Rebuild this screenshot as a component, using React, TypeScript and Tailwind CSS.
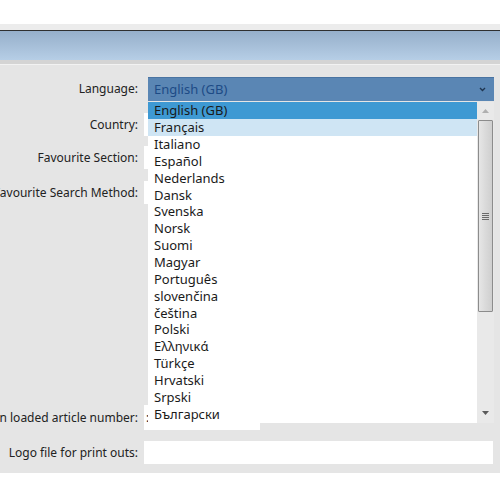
import { useState } from 'react';

const LANGUAGES = [
  'English (GB)',
  'Français',
  'Italiano',
  'Español',
  'Nederlands',
  'Dansk',
  'Svenska',
  'Norsk',
  'Suomi',
  'Magyar',
  'Português',
  'slovenčina',
  'čeština',
  'Polski',
  'Ελληνικά',
  'Türkçe',
  'Hrvatski',
  'Srpski',
  'Български',
];

function Label({ text }: { text: string }) {
  return (
    <div className="w-[138px] shrink-0 h-[23px] flex items-center justify-end whitespace-nowrap text-[#222222]">
      {text}
    </div>
  );
}

export default function App() {
  const [language, setLanguage] = useState('English (GB)');
  const [hovered] = useState('Français');

  return (
    <div
      className="relative w-[500px] h-[500px] overflow-hidden bg-white text-[12px] leading-none"
      style={{ fontFamily: '"Noto Sans", "Open Sans", sans-serif' }}
    >
      {/* Window chrome */}
      <div className="h-[24px] bg-white" />
      <div className="h-[6px] bg-[#ececec]" />
      <div className="h-[1px] bg-[#2f2f2f]" />
      <div className="h-[29px] bg-gradient-to-b from-[#96afca] to-[#b6cee6]" />
      <div className="h-[4px] bg-[#d4d4d4]" />
      <div className="h-[1px] bg-[#f2f2f2]" />

      {/* Settings form */}
      <div className="h-[408px] bg-[#e5e5e5] pt-[12px] flex flex-col">
        <div className="h-[36px] flex gap-[10px]">
          <Label text="Language:" />
          <div className="w-[346px] h-[24px] bg-[#5a86b4] border-t border-[#4a74a2] flex items-center justify-between pl-[6px] pr-[8px]">
            <span className="text-[#1d4b86] text-[13px]">{language}</span>
            <svg className="w-[7px] h-[5px] text-[#1f3550]" viewBox="0 0 7 5" fill="none" stroke="currentColor" strokeWidth={1.4}>
              <path d="M1 1l2.5 2.5L6 1" />
            </svg>
          </div>
        </div>
        <div className="h-[33px] flex gap-[6px]">
          <Label text="Country:" />
          <div className="w-[350px] h-[23px] bg-white" />
        </div>
        <div className="h-[35px] flex gap-[6px]">
          <Label text="Favourite Section:" />
          <div className="w-[350px] h-[23px] bg-white" />
        </div>
        <div className="h-[224px] flex gap-[6px]">
          <Label text="Favourite Search Method:" />
          <div className="w-[350px] h-[23px] bg-white" />
        </div>
        <div className="h-[36px] flex gap-[6px]">
          <div className="w-[138px] shrink-0 h-[25px] flex items-center justify-end whitespace-nowrap text-[#222222]">
            Open loaded article number:
          </div>
          <div className="w-[116px] h-[25px] bg-white flex items-center pl-[2px] text-[#222222]">:</div>
        </div>
        <div className="h-[23px] flex gap-[6px]">
          <Label text="Logo file for print outs:" />
          <div className="w-[349px] h-[23px] bg-white" />
        </div>
      </div>

      {/* Open language dropdown */}
      <div className="absolute left-[148px] top-[102px] w-[346px] h-[321px] flex bg-white text-[13px]">
        <div className="w-[329px] flex flex-col">
          {LANGUAGES.map((lang) => (
            <div
              key={lang}
              onClick={() => setLanguage(lang)}
              className={`h-[16.85px] shrink-0 flex items-center pl-[6px] pt-[1px] text-[#1a1a1a] ${
                lang === language ? 'bg-[#3e99d3]' : lang === hovered ? 'bg-[#cfe5f4]' : ''
              }`}
            >
              {lang}
            </div>
          ))}
        </div>
        <div className="w-[17px] bg-[#e9e9e9] flex flex-col items-center">
          <div className="h-[18px] flex items-center justify-center">
            <svg className="w-[7px] h-[4px]" viewBox="0 0 7 4">
              <path d="M0 4L3.5 0L7 4z" fill="#b0b0b0" />
            </svg>
          </div>
          <div className="w-[15px] h-[192px] border border-[#8c8c8c] rounded-[1px] bg-gradient-to-r from-[#e6e6e6] via-[#dadada] to-[#cfcfcf] flex items-center justify-center">
            <div className="flex flex-col gap-[1px]">
              <div className="w-[7px] h-[1px] bg-[#6a6a6a]" />
              <div className="w-[7px] h-[1px] bg-[#6a6a6a]" />
              <div className="w-[7px] h-[1px] bg-[#6a6a6a]" />
              <div className="w-[7px] h-[1px] bg-[#6a6a6a]" />
            </div>
          </div>
          <div className="flex-1" />
          <div className="h-[20px] flex items-center justify-center">
            <svg className="w-[7px] h-[4px]" viewBox="0 0 7 4">
              <path d="M0 0L3.5 4L7 0z" fill="#5a5a5a" />
            </svg>
          </div>
        </div>
      </div>
    </div>
  );
}
